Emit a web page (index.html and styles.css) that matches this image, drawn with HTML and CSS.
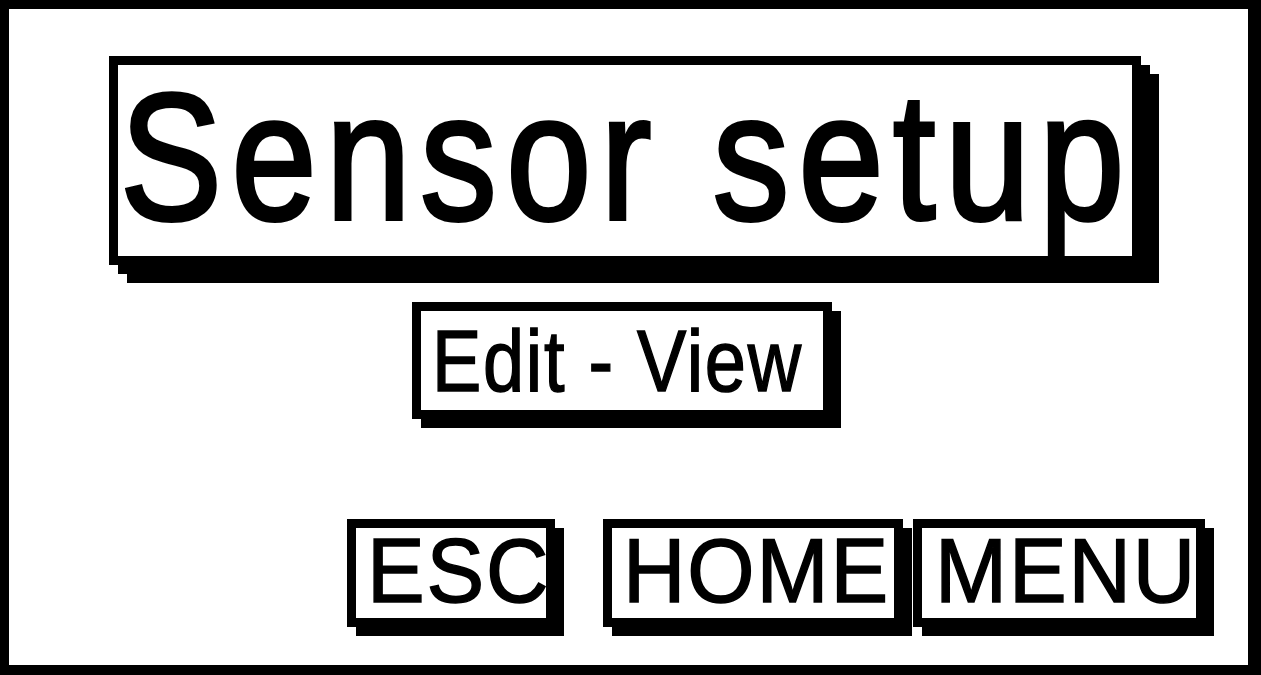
FILE: index.html
```html
<!DOCTYPE html>
<html lang="en">
<head>
    <meta charset="UTF-8">
    <meta name="viewport" content="width=device-width, initial-scale=1.0">
    <title>Sensor setup</title>
    <link rel="stylesheet" href="styles.css">
</head>
<body>
    <div class="lcd">
        <div class="panel title-panel"><span class="label title-text">Sensor setup</span></div>
        <div class="panel mode-panel"><span class="label mode-text">Edit - View</span></div>
        <div class="keys">
            <div class="panel key key-esc"><span class="label">ESC</span></div>
            <div class="panel key key-home"><span class="label">HOME</span></div>
            <div class="panel key key-menu"><span class="label">MENU</span></div>
        </div>
    </div>
</body>
</html>
```

FILE: styles.css
```css
* {
    margin: 0;
    padding: 0;
    box-sizing: border-box;
}
body {
    background-color: #fff;
    color: #000;
    font-family: "Liberation Sans", Arial, sans-serif;
}
/* 屏幕外框 */
.lcd {
    width: 1261px;
    height: 675px;
    border-style: solid;
    border-color: #000;
    border-width: 9px 13px 10px 9px;
    display: flex;
    flex-direction: column;
    align-items: flex-start;
    overflow: hidden;
}
/* 带阴影的方框 */
.panel {
    border: 9px solid #000;
    background-color: #fff;
    box-shadow: 9px 9px 0 #000;
    white-space: nowrap;
}
/* 字形略微收窄，字间距放宽，接近点阵字体 */
.label {
    display: inline-block;
    transform-origin: left top;
    transform: scaleX(0.95);
    letter-spacing: 2px;
    -webkit-text-stroke: 1.5px #000;
}
.title-panel {
    margin: 47px 0 0 100px;
    width: 1032px;
    height: 209px;
    padding: 2px 0 0 2px;
    font-size: 180px;
    line-height: 180px;
    box-shadow: 9px 9px 0 #000, 18px 18px 0 #000;
}
.title-text {
    transform: scaleX(0.85);
    letter-spacing: 11px;
    -webkit-text-stroke: 4px #000;
}
.mode-panel {
    margin: 37px 0 0 403px;
    width: 420px;
    height: 117px;
    padding: 6px 0 0 11px;
    font-size: 87px;
    line-height: 87px;
}
.mode-text {
    transform: scaleX(0.85);
    letter-spacing: 2px;
}
/* 底部按键 */
.keys {
    display: flex;
    margin: 100px 0 0 338px;
}
.key {
    height: 108px;
    padding-left: 11px;
    font-size: 91px;
    line-height: 85px;
}
.key-esc {
    width: 208px;
}
.key-home {
    width: 300px;
    margin-left: 48px;
}
.key-menu {
    width: 292px;
    margin-left: 10px;
    padding-left: 13px;
}
```
